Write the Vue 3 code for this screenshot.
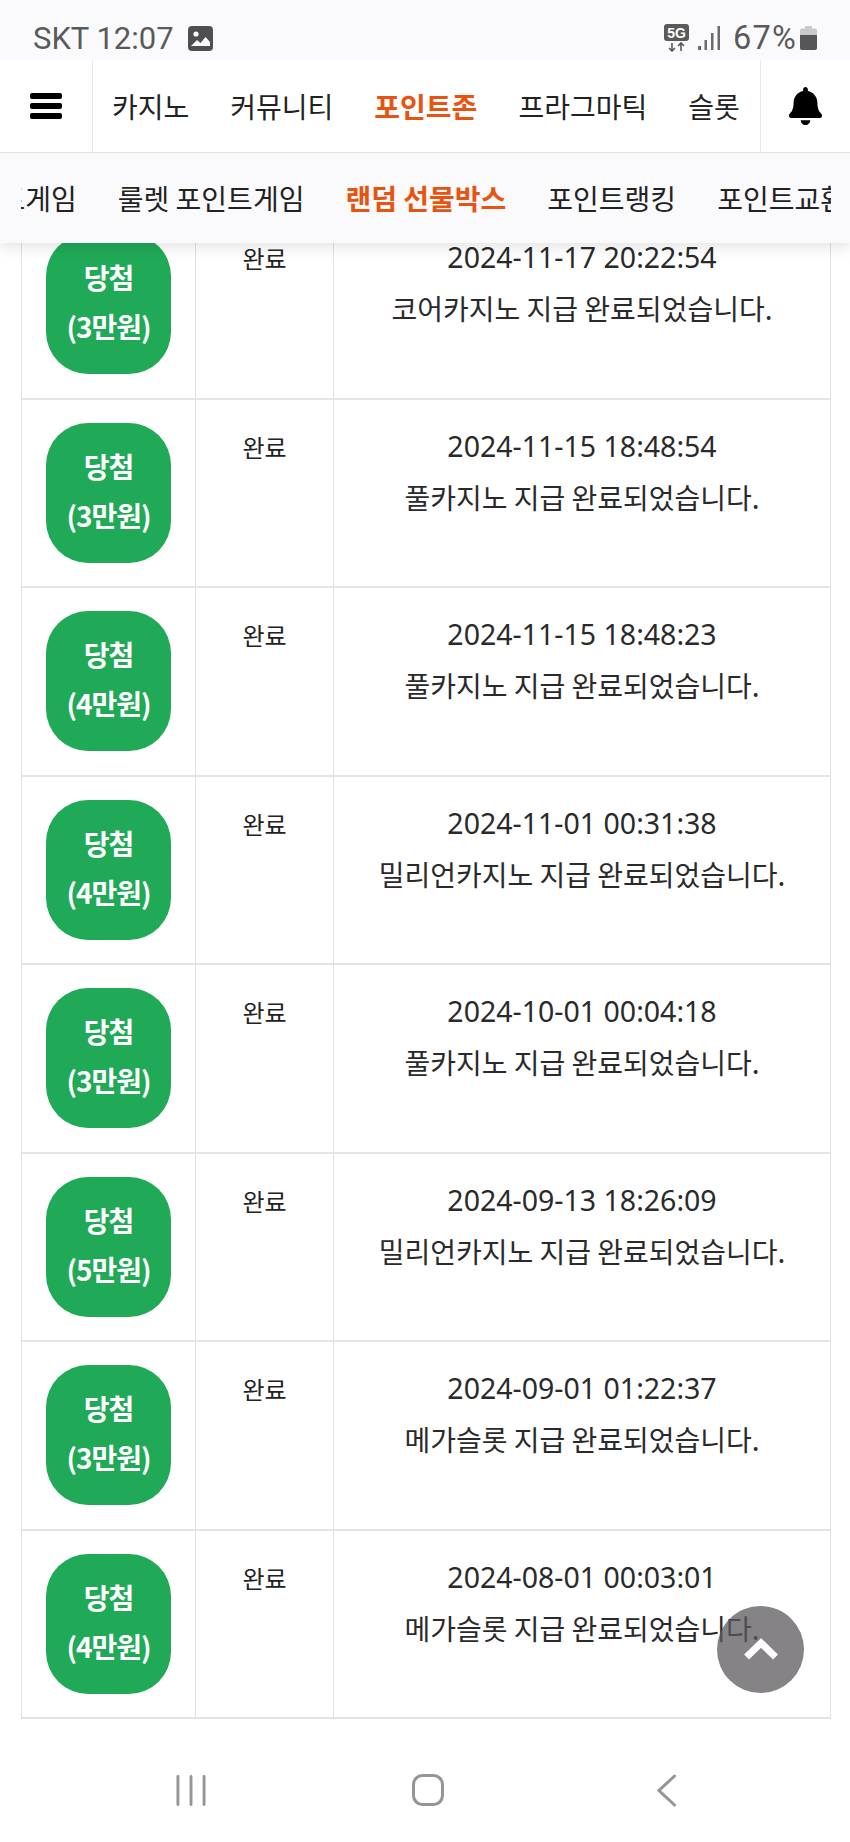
<script setup>
const mainMenu = [
  { label: '카지노' },
  { label: '커뮤니티' },
  { label: '포인트존', active: true },
  { label: '프라그마틱' },
  { label: '슬롯' }
]

const subMenu = [
  { label: '포인트게임' },
  { label: '룰렛 포인트게임' },
  { label: '랜덤 선물박스', active: true },
  { label: '포인트랭킹' },
  { label: '포인트교환' }
]

const rows = [
  { prize: 3, date: '2024-11-17 20:22:54', site: '코어카지노' },
  { prize: 3, date: '2024-11-15 18:48:54', site: '풀카지노' },
  { prize: 4, date: '2024-11-15 18:48:23', site: '풀카지노' },
  { prize: 4, date: '2024-11-01 00:31:38', site: '밀리언카지노' },
  { prize: 3, date: '2024-10-01 00:04:18', site: '풀카지노' },
  { prize: 5, date: '2024-09-13 18:26:09', site: '밀리언카지노' },
  { prize: 3, date: '2024-09-01 01:22:37', site: '메가슬롯' },
  { prize: 4, date: '2024-08-01 00:03:01', site: '메가슬롯' }
]
</script>

<template>
  <div class="phone">
    <header class="top">
      <div class="status">
        <div class="status-left">
          <span class="clock">SKT 12:07</span>
          <svg class="gallery" viewBox="0 0 25 25">
            <rect width="25" height="25" rx="4" fill="#4f4f51" />
            <circle cx="8" cy="8" r="2.6" fill="#fafafc" />
            <path d="M3 20l6-6 3.5 3 5-6 4.500 5v4z" fill="#fafafc" />
          </svg>
        </div>
        <div class="status-right">
          <svg class="net" viewBox="0 0 25 28">
            <rect width="25" height="17" rx="3" fill="#5a5a5c" />
            <text x="12.500" y="14" text-anchor="middle" class="net-label">5G</text>
            <path d="M8 19v8M5 24l3 3 3-3M17 27v-8M14 22l3-3 3 3" fill="none" stroke="#5a5a5c" stroke-width="1.600" />
          </svg>
          <svg class="signal" viewBox="0 0 23 24">
            <rect x="0" y="20" width="3" height="4" fill="#6a6a6c" />
            <rect x="6.500" y="14" width="2.500" height="10" fill="#6a6a6c" />
            <rect x="13" y="7" width="2.500" height="17" fill="#6a6a6c" />
            <rect x="19.500" y="0" width="2.500" height="24" fill="#6a6a6c" />
          </svg>
          <span class="percent">67%</span>
          <svg class="battery" viewBox="0 0 17 24">
            <path d="M5 0h7v2.500h3a2 2 0 0 1 2 2V22a2 2 0 0 1-2 2H2a2 2 0 0 1-2-2V4.500a2 2 0 0 1 2-2h3z" fill="#c9c9cb" />
            <path d="M0 9h17v13a2 2 0 0 1-2 2H2a2 2 0 0 1-2-2z" fill="#565658" />
          </svg>
        </div>
      </div>

      <nav class="main-nav">
        <div class="icon-cell left">
          <svg class="bars" viewBox="0 0 32 26">
            <rect width="32" height="6" rx="2" />
            <rect y="10" width="32" height="6" rx="2" />
            <rect y="20" width="32" height="6" rx="2" />
          </svg>
        </div>
        <ul class="main-list">
          <li v-for="item in mainMenu" :key="item.label" :class="{ on: item.active }">{{ item.label }}</li>
        </ul>
        <div class="icon-cell right">
          <svg class="bell" viewBox="0 0 448 512">
            <path d="M224 512c35.32 0 63.97-28.65 63.97-64H160.030c0 35.350 28.650 64 63.970 64zm215.390-149.710c-19.320-20.760-55.470-51.990-55.470-154.290 0-77.700-54.480-139.900-127.940-155.160V32c0-17.670-14.320-32-31.980-32s-31.980 14.330-31.980 32v20.840C118.560 68.100 64.080 130.300 64.080 208c0 102.300-36.150 133.530-55.470 154.290-6 6.450-8.660 14.160-8.610 21.710.11 16.400 12.980 32 32.100 32h383.800c19.120 0 32-15.600 32.100-32 .05-7.550-2.610-15.270-8.610-21.710z" />
          </svg>
        </div>
      </nav>

      <div class="sub-nav">
        <ul class="sub-list">
          <li v-for="item in subMenu" :key="item.label" :class="{ on: item.active }">{{ item.label }}</li>
        </ul>
      </div>
    </header>

    <main class="content">
      <div class="history">
        <div v-for="row in rows" :key="row.date" class="row">
          <div class="cell">
            <div class="badge">당첨<br />({{ row.prize }}만원)</div>
          </div>
          <div class="cell state">완료</div>
          <div class="cell info">
            <span class="date">{{ row.date }}</span><br />{{ row.site }} 지급 완료되었습니다.
          </div>
        </div>
      </div>
    </main>

    <button type="button" class="to-top">
      <svg viewBox="0 0 36 24">
        <path d="M3.500 20L18 6l14.500 14" fill="none" stroke="#fff" stroke-width="7" />
      </svg>
    </button>

    <footer class="softkeys">
      <svg class="key-recent" viewBox="0 0 31 31">
        <path d="M2 1v29M15.500 1v29M29 1v29" stroke="#959597" stroke-width="3" stroke-linecap="round" />
      </svg>
      <svg class="key-home" viewBox="0 0 32 32">
        <rect x="1.500" y="1.500" width="29" height="29" rx="9" fill="none" stroke="#959597" stroke-width="3" />
      </svg>
      <svg class="key-back" viewBox="0 0 20 33">
        <path d="M17.500 2L2 16.500 17.500 31" fill="none" stroke="#959597" stroke-width="3" stroke-linecap="round" />
      </svg>
    </footer>
  </div>
</template>

<style>
html,
body {
  margin: 0;
  background: #fff;
}
</style>

<style scoped>
ul {
  list-style: none;
  margin: 0;
  padding: 0;
}

.phone {
  position: relative;
  width: 850px;
  height: 1842px;
  overflow: hidden;
  background: #fff;
  font-family: "Noto Sans CJK KR", "Noto Sans", sans-serif;
  color: #222;
}

/* =====================================
   HEADER (lies over the list)
===================================== */
.top {
  position: absolute;
  top: 0;
  left: 0;
  right: 0;
  z-index: 5;
  box-shadow: 0 5px 12px rgba(0, 0, 0, 0.1);
}

.status {
  height: 60px;
  padding: 0 33px;
  display: flex;
  align-items: center;
  justify-content: space-between;
  background: #fafafc;
  color: #5a5a5c;
  font-family: Roboto, sans-serif;
  font-size: 31px;
}

.status-left,
.status-right {
  display: flex;
  align-items: center;
  padding-top: 18px;
  margin-top: -2px;
}

.gallery {
  width: 25px;
  height: 25px;
  margin-left: 14px;
}

.net {
  width: 25px;
  height: 28px;
}

.net-label {
  font-family: "Liberation Sans", sans-serif;
  font-size: 14px;
  font-weight: 700;
  fill: #fff;
}

.signal {
  width: 23px;
  height: 24px;
  margin-left: 9px;
}

.percent {
  margin-left: 12px;
  font-size: 32.500px;
  letter-spacing: 1.200px;
}

.battery {
  width: 17px;
  height: 24px;
  margin-left: 3px;
}

.main-nav {
  height: 93px;
  display: flex;
  background: #fff;
  border-bottom: 1px solid #e2e1e4;
  box-sizing: border-box;
}

.icon-cell {
  display: flex;
  align-items: center;
  justify-content: center;
  flex: none;
}

.icon-cell.left {
  width: 93px;
  border-right: 1px solid #e9e8eb;
  box-sizing: border-box;
}

.icon-cell.right {
  width: 90px;
  border-left: 1px solid #e9e8eb;
  box-sizing: border-box;
}

.bars {
  width: 32px;
  height: 26px;
}

.bell {
  width: 35px;
  height: 38px;
}

.main-list {
  flex: 1;
  display: flex;
  align-items: center;
  gap: 41px;
  padding-left: 19px;
  font-size: 28px;
  white-space: nowrap;
  overflow: hidden;
}

.on {
  color: #e8540f;
  font-weight: 700;
}

.sub-nav {
  height: 90px;
  margin: 0;
  padding: 0 19px 0 21px;
  background: #faf9fb;
  overflow: hidden;
}

.sub-list {
  height: 100%;
  display: flex;
  align-items: center;
  gap: 41px;
  overflow: hidden;
  font-size: 28px;
  white-space: nowrap;
}

/* scrolled strip: first item is cut off on the left */
.sub-list li:first-child {
  margin-left: -73px;
}

.sub-list li {
  flex: none;
}

/* =====================================
   HISTORY TABLE
===================================== */
.content {
  padding: 211px 19px 0 21px;
}

.history {
  border-left: 1px solid #e0dfe3;
  border-right: 1px solid #e0dfe3;
}

.row {
  height: 188.500px;
  box-sizing: border-box;
  display: grid;
  grid-template-columns: 173px 138px 1fr;
  border-bottom: 2px solid #e4e3e7;
}

.cell + .cell {
  border-left: 1px solid #e0dfe3;
}

.cell {
  text-align: center;
}

.badge {
  width: 125px;
  height: 140px;
  margin: 23px 0 0 24px;
  box-sizing: border-box;
  padding-top: 19px;
  border-radius: 42px;
  background: #20a957;
  color: #fff;
  font-size: 28px;
  font-weight: 700;
  line-height: 49px;
  letter-spacing: -1px;
}

.state {
  padding-top: 29px;
  font-size: 24px;
  line-height: 36px;
}

.info {
  padding-top: 20px;
  font-size: 28px;
  line-height: 51px;
  color: #2a2a2c;
}

.date {
  font-family: "Noto Sans", "Noto Sans CJK KR", sans-serif;
  font-size: 28.500px;
}

/* =====================================
   SCROLL TO TOP
===================================== */
.to-top {
  position: absolute;
  right: 46px;
  bottom: 149px;
  width: 87px;
  height: 87px;
  padding: 0;
  border: none;
  border-radius: 50%;
  background: rgba(92, 90, 94, 0.75);
  display: flex;
  align-items: center;
  justify-content: center;
}

.to-top svg {
  width: 36px;
  height: 24px;
  margin-top: -2px;
}

/* =====================================
   ANDROID SOFT KEYS
===================================== */
.softkeys {
  height: 142px;
  padding-left: 176px;
  display: flex;
  align-items: center;
}

.key-recent {
  width: 30px;
  height: 31px;
}

.key-home {
  width: 32px;
  height: 32px;
  margin-left: 206px;
}

.key-back {
  width: 20px;
  height: 33px;
  margin-left: 213px;
}
</style>
